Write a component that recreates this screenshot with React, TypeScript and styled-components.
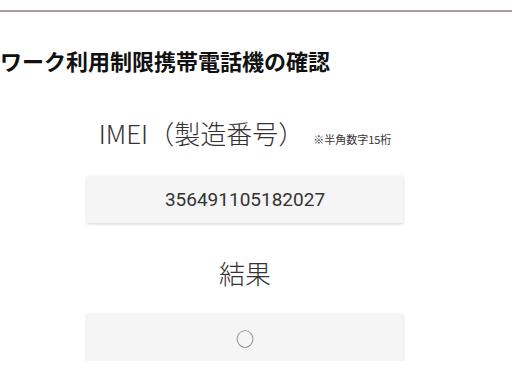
import React, {FC} from 'react';
import styled, {createGlobalStyle} from "styled-components";

const GlobalStyle = createGlobalStyle`
  html, body {
    margin: 0;
    padding: 0;
    background: #ffffff;
  }
  body {
    font-family: "Noto Sans CJK JP", "Noto Sans", sans-serif;
    color: #333333;
  }
`

const Page = styled.div`
  padding-top: 10px;
  width: 512px;
  overflow: hidden;
`

const TopRule = styled.div`
  height: 2px;
  background: #aa9ca1;
`

const Title = styled.h2`
  margin: 32px 0 0;
  font-size: 22px;
  line-height: 33px;
  font-weight: 700;
  color: #111111;
  white-space: nowrap;
`

const Form = styled.div`
  width: 316px;
  margin: 38px 0 0 87px;
  display: flex;
  flex-direction: column;
  align-items: stretch;
`

const Label = styled.div<{$gap?: number}>`
  margin-top: ${p => p.$gap || 0}px;
  height: 36px;
  display: flex;
  justify-content: center;
  align-items: baseline;
  font-size: 26px;
  line-height: 36px;
  font-weight: 300;
  color: #333333;
  white-space: nowrap;
`

const Note = styled.span`
  margin-left: 9px;
  font-size: 11px;
  line-height: 1;
  font-weight: 400;
  color: #333333;
`

const Field = styled.div<{$gap: number}>`
  margin-top: ${p => p.$gap}px;
  height: 47px;
  display: flex;
  justify-content: center;
  align-items: center;
  background: #f5f5f5;
  box-shadow: 0 1px 3px rgba(0, 0, 0, 0.18);
  font-family: Roboto, "Noto Sans CJK JP", sans-serif;
  font-size: 19px;
  color: #333333;
`

const Mark = styled.span`
  font-family: "Noto Sans CJK JP", sans-serif;
  font-size: 18px;
  font-weight: 300;
  color: #555555;
`

const App: FC = () => {
    return <>
        <GlobalStyle/>
        <Page>
            <TopRule/>
            <Title>ワーク利用制限携帯電話機の確認</Title>
            <Form>
                <Label>
                    IMEI（製造番号）<Note>※半角数字15桁</Note>
                </Label>
                <Field $gap={25}>356491105182027</Field>
                <Label $gap={32}>結果</Label>
                <Field $gap={23}><Mark>○</Mark></Field>
            </Form>
        </Page>
    </>
};

export default App;
